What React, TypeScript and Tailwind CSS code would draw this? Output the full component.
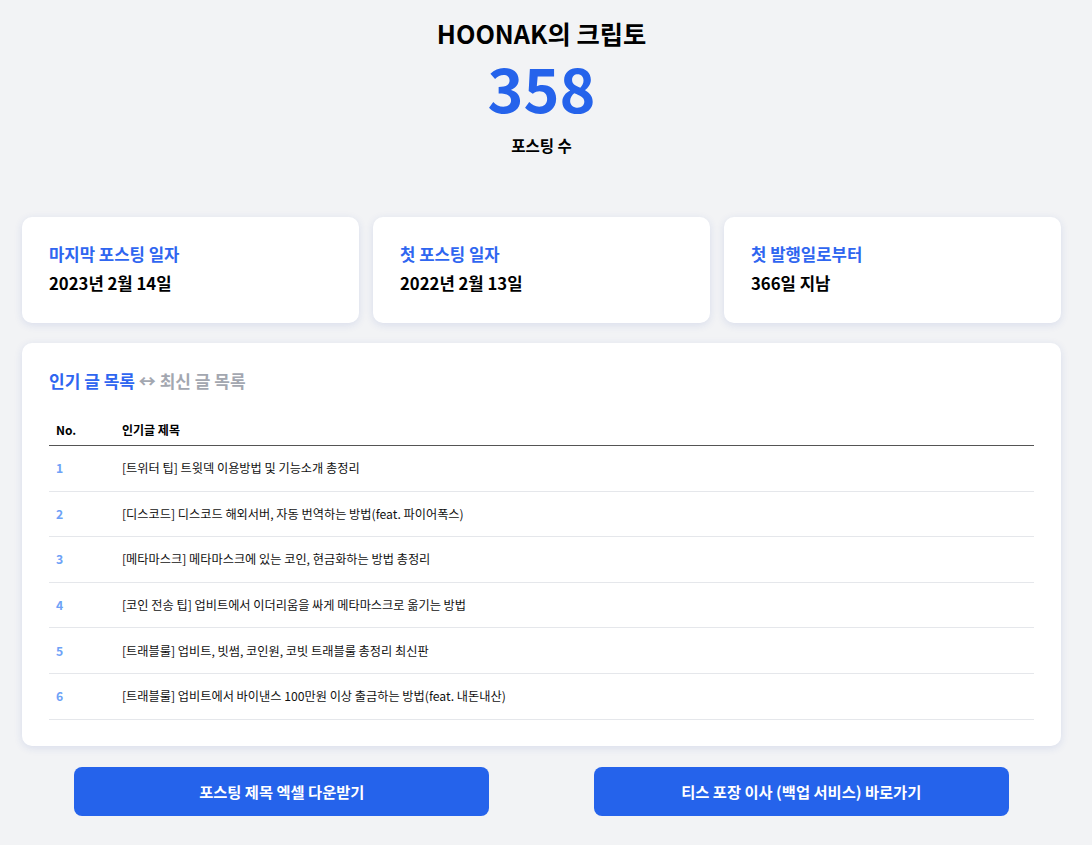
import React from "react";

const rows = [
  "[트위터 팁] 트윗덱 이용방법 및 기능소개 총정리",
  "[디스코드] 디스코드 해외서버, 자동 번역하는 방법(feat. 파이어폭스)",
  "[메타마스크] 메타마스크에 있는 코인, 현금화하는 방법 총정리",
  "[코인 전송 팁] 업비트에서 이더리움을 싸게 메타마스크로 옮기는 방법",
  "[트래블룰] 업비트, 빗썸, 코인원, 코빗 트래블룰 총정리 최신판",
  "[트래블룰] 업비트에서 바이낸스 100만원 이상 출금하는 방법(feat. 내돈내산)",
];

const cards = [
  { label: "마지막 포스팅 일자", value: "2023년 2월 14일" },
  { label: "첫 포스팅 일자", value: "2022년 2월 13일" },
  { label: "첫 발행일로부터", value: "366일 지남" },
];

export default function App() {
  return (
    <div
      className="min-h-[845px] w-full bg-[#f2f3f5] text-black"
      style={{ fontFamily: '"Noto Sans CJK KR", "Noto Sans", sans-serif' }}
    >
      <div className="ml-[22px] w-[1039px] pt-[17px] pb-[30px]">
        <div className="flex flex-col items-center">
          <h1 className="text-[25.3px] leading-[32px] font-bold">HOONAK의 크립토</h1>
          <div className="mt-[6px] text-[61px] leading-[64px] font-bold text-[#2563eb]">358</div>
          <div className="mt-[15px] text-[15.5px] leading-[22px] font-bold">포스팅 수</div>
        </div>

        <div className="mt-[61px] grid grid-cols-3 gap-[14px]">
          {cards.map((c) => (
            <div
              key={c.label}
              className="h-[106px] rounded-[10px] bg-white pl-[27px] pt-[25px] shadow-[0_2px_8px_rgba(30,64,175,0.12)]"
            >
              <div className="text-[16.7px] leading-[24px] font-bold text-[#2f66f0]">{c.label}</div>
              <div className="mt-[5px] text-[16.7px] leading-[24px] font-semibold">{c.value}</div>
            </div>
          ))}
        </div>

        <div className="mt-[20px] rounded-[10px] bg-white px-[27px] pt-[26px] pb-[26px] shadow-[0_2px_8px_rgba(30,64,175,0.12)]">
          <div className="text-[17px] leading-[24px] font-bold">
            <span className="text-[#2f66f0]">인기 글 목록</span>
            <span className="text-[#a3a7b0]"> ↔ 최신 글 목록</span>
          </div>
          <div className="mt-[22px]">
            <div className="flex h-[31px] items-center border-b border-[#555] text-[12px] font-bold">
              <div className="w-[66px] pl-[7px]">No.</div>
              <div className="pl-[7px]">인기글 제목</div>
            </div>
            {rows.map((r, i) => (
              <div
                key={i}
                className="flex h-[45.6px] items-center border-b border-[#e5e7eb] text-[12.2px]"
              >
                <div className="w-[66px] pl-[7px] font-bold text-[#6ea2f7]">{i + 1}</div>
                <div className="pl-[7px] text-[#111]">{r}</div>
              </div>
            ))}
          </div>
        </div>

        <div className="mt-[21px] grid grid-cols-2">
          <div className="flex justify-center">
            <button className="h-[49px] w-[415px] rounded-[8px] bg-[#2563eb] text-[15.3px] font-bold text-white">
              포스팅 제목 엑셀 다운받기
            </button>
          </div>
          <div className="flex justify-center">
            <button className="h-[49px] w-[415px] rounded-[8px] bg-[#2563eb] text-[15.3px] font-bold text-white">
              티스 포장 이사 (백업 서비스) 바로가기
            </button>
          </div>
        </div>
      </div>
    </div>
  );
}
